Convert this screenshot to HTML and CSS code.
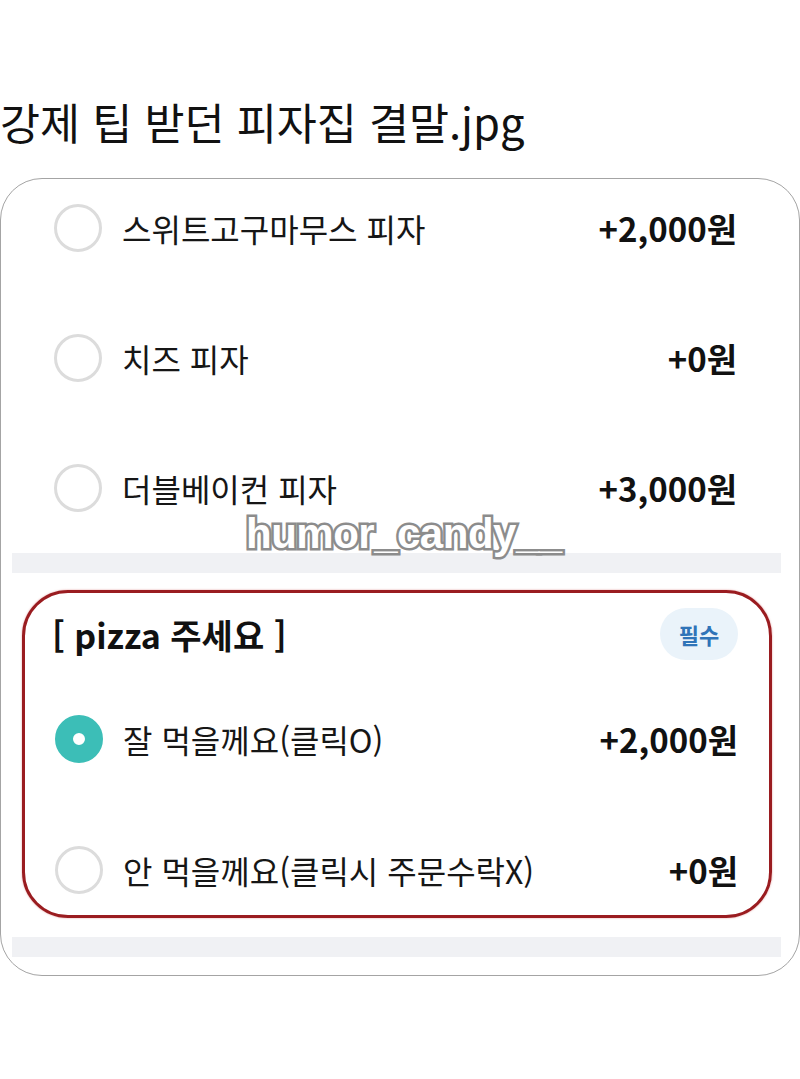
FILE: index.html
```html
<!DOCTYPE html>
<html lang="ko">
<head>
<meta charset="utf-8">
<link rel="stylesheet" href="styles.css">
</head>
<body>
<h1 class="title">강제 팁 받던 피자집 결말.jpg</h1>
<div class="card">
  <div class="options">
    <div class="row"><span class="radio"></span><span class="label">스위트고구마무스 피자</span><span class="price">+2,000원</span></div>
    <div class="row"><span class="radio"></span><span class="label">치즈 피자</span><span class="price">+0원</span></div>
    <div class="row"><span class="radio"></span><span class="label">더블베이컨 피자</span><span class="price">+3,000원</span></div>
  </div>
  <div class="band band-1"></div>
  <div class="watermark">humor_candy__</div>
  <div class="group">
    <div class="group-head"><span class="group-title">[ pizza 주세요 ]</span><span class="badge">필수</span></div>
    <div class="row row-a"><span class="radio on"></span><span class="label">잘 먹을께요(클릭O)</span><span class="price">+2,000원</span></div>
    <div class="row row-b"><span class="radio"></span><span class="label">안 먹을께요(클릭시 주문수락X)</span><span class="price">+0원</span></div>
  </div>
  <div class="band band-2"></div>
</div>
</body>
</html>
```

FILE: styles.css
```css
* { box-sizing: border-box; }
body {
  margin: 0;
  background: #fff;
  font-family: "Noto Sans CJK KR", "Noto Sans", sans-serif;
  color: #141414;
}
.title {
  margin: 0;
  padding-top: 94px;
  height: 178px;
  font-size: 43.5px;
  line-height: 56px;
  font-weight: 400;
  color: #111;
}
.card {
  position: relative;
  width: 800px;
  height: 798px;
  border: 1.5px solid #a4a4a4;
  border-radius: 42px;
  overflow: hidden;
}
.options {
  padding-top: 19px;
  display: flex;
  flex-direction: column;
  gap: 70px;
}
.row {
  display: flex;
  align-items: center;
  height: 60px;
  padding: 0 62px 0 53px;
}
.radio {
  flex: none;
  width: 48px;
  height: 48px;
  border-radius: 50%;
  border: 3px solid #dcdcdc;
  margin-right: 20px;
}
.radio.on {
  border: 18px solid #3cbeb7;
  background: #fff;
}
.label {
  flex: 1;
  font-size: 32px;
  color: #161616;
}
.price {
  font-size: 33px;
  font-weight: 700;
  color: #111;
}
.band {
  height: 20px;
  margin: 0 18px 0 11px;
  background: #f0f1f4;
}
.band-1 { margin-top: 35px; }
.band-2 { margin-top: 19px; }
.watermark {
  position: absolute;
  left: 245px;
  top: 330px;
  font-family: "Liberation Sans", Arial, sans-serif;
  font-weight: 700;
  font-size: 42px;
  line-height: 50px;
  color: #fff;
  -webkit-text-stroke: 5px #8c8c8c;
  paint-order: stroke fill;
  letter-spacing: -0.5px;
}
.group {
  margin: 17px 27px 0 21px;
  height: 328px;
  border: 3px solid #9a1c20;
  border-radius: 46px;
  box-shadow: 0 0 2px rgba(200, 40, 40, 0.5);
  padding-top: 15px;
}
.group-head {
  display: flex;
  align-items: center;
  justify-content: space-between;
  height: 52px;
  padding: 0 31px 0 27px;
}
.group-title {
  font-size: 34px;
  font-weight: 700;
  color: #111;
}
.badge {
  width: 78px;
  height: 52px;
  border-radius: 26px;
  background: #eaf3fa;
  color: #2f74b8;
  font-size: 22px;
  font-weight: 700;
  display: flex;
  align-items: center;
  justify-content: center;
}
.group .row { padding: 0 31px 0 30px; }
.row-a { margin-top: 49px; }
.row-b { margin-top: 71px; }
```
